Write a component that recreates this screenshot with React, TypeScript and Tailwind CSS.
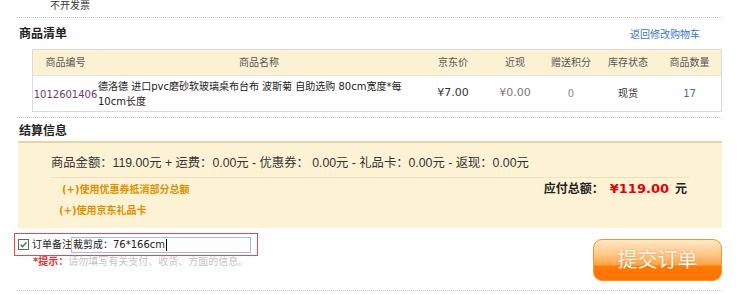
export default function App() {
  const cols = "grid grid-cols-[65px_322px_66px_58px_54px_60px_63px]";

  return (
    <div className="w-[740px] h-[294px] overflow-hidden bg-white text-[#333] font-['DejaVu_Sans','Noto_Sans_CJK_SC',sans-serif]">
      <div className="h-[11px] pl-[50px] text-[10px] leading-[11px]">不开发票</div>
      <div className="ml-[17px] mt-[6px] w-[705px] border-t border-dotted border-[#c6c6c6]" />

      {/* 商品清单 */}
      <div className="flex h-[31px] w-[722px] items-center justify-between pl-[19px] pr-[22px]">
        <h2 className="text-[12px] font-bold leading-[14px] text-[#222]">商品清单</h2>
        <a href="#" className="pt-[2px] text-[10px] leading-[12px] text-[#3a76c4]">
          返回修改购物车
        </a>
      </div>

      <div className="ml-[32px] w-[690px] border border-[#dadada] text-[10px]">
        <div className={`${cols} h-[26px] items-center border-b border-[#e2e2e2] bg-[#fdf1d4] text-center text-[#555]`}>
          <div>商品编号</div>
          <div>商品名称</div>
          <div>京东价</div>
          <div>近现</div>
          <div>赠送积分</div>
          <div>库存状态</div>
          <div>商品数量</div>
        </div>
        <div className={`${cols} h-[35px] items-center text-center`}>
          <div className="pt-[1px] text-[#6d3a6f]">1012601406</div>
          <div className="text-left leading-[15px] text-[#222]">
            德洛德 进口pvc磨砂软玻璃桌布台布 波斯菊 自助选购 80cm宽度*每
            <br />
            10cm长度
          </div>
          <div className="text-[11px] text-[#333]">¥7.00</div>
          <div className="text-[11px] text-[#777]">¥0.00</div>
          <div className="text-[#888]">0</div>
          <div className="text-[#333]">现货</div>
          <div className="text-[#3d6a9e]">17</div>
        </div>
      </div>

      <div className="ml-[17px] mt-[5px] w-[705px] border-t border-dotted border-[#c6c6c6]" />

      {/* 结算信息 */}
      <div className="h-[23px] pl-[19px] pt-[6px]">
        <h2 className="text-[12px] font-bold leading-[14px] text-[#222]">结算信息</h2>
      </div>

      <div className="ml-[18px] w-[704px] border-t-2 border-[#e6d3a6] bg-[#fef2d5] pt-[12px] pb-[8px]">
        <div className="pl-[33px] font-['Liberation_Sans','Noto_Sans_CJK_SC',sans-serif] text-[12.3px] leading-[16px] text-[#333]">
          商品金额：119.00元 + 运费：0.00元 - 优惠券： 0.00元 - 礼品卡：0.00元 - 返现：0.00元
        </div>
        <div className="ml-[33px] mt-[6px] w-[639px] border-t border-[#f1e2bf]" />
        <div className="flex h-[22px] items-center justify-between pl-[44px] pr-[35px]">
          <a href="#" className="text-[10px] font-bold text-[#d99100]">
            (+)使用优惠券抵消部分总额
          </a>
          <div className="flex items-baseline text-[12px] font-bold text-[#222]">
            应付总额：
            <span className="ml-[6px] text-[13px] text-[#e4000b]">¥119.00</span>
            <span className="ml-[6px]">元</span>
          </div>
        </div>
        <div className="flex h-[20px] items-center pl-[41px]">
          <a href="#" className="text-[10px] font-bold text-[#d99100]">
            (+)使用京东礼品卡
          </a>
        </div>
      </div>

      {/* 订单备注 + 提交 */}
      <div className="flex h-[53px] items-start justify-between">
        <div className="ml-[14px] mt-[5px]">
          <div className="flex h-[23px] w-[244px] items-center border border-[#e5484d] pl-[3px]">
            <span className="flex h-[11px] w-[11px] items-center justify-center border border-[#5d6670] bg-white">
              <svg viewBox="0 0 10 10" className="h-[9px] w-[9px]">
                <path d="M1.8 5.2 L4 7.4 L8.3 2.6" fill="none" stroke="#1f9a2a" strokeWidth="1.7" />
              </svg>
            </span>
            <span className="ml-[3px] text-[10px] leading-[12px] text-[#222]">订单备注</span>
            <div className="-ml-[1px] flex h-[16px] w-[180px] items-center border border-[#a9bcd0] bg-white pl-[1px] text-[10px] text-[#222]">
              裁剪成：76*166cm
              <span className="ml-[1px] h-[12px] w-[1px] bg-black" />
            </div>
          </div>
          <div className="pl-[19px] text-[10px] leading-[12px] text-[#c4c4c4]">
            <span className="font-bold text-[#e03030]">*提示：</span>
            请勿填写有关支付、收货、方面的信息。
          </div>
        </div>

        <button className="mr-[18px] mt-[11px] flex h-[42px] w-[129px] items-center justify-center rounded-[9px] border border-[#f3972a] bg-[linear-gradient(to_bottom,#ffe8c8_0%,#ffc888_35%,#ffa445_62%,#ff7a05_66%,#ff7200_100%)] text-[20px] leading-[24px] text-[#fffaf2] [text-shadow:0_0_2px_rgba(200,90,0,0.5)]">
          提交订单
        </button>
      </div>

      <div className="ml-[17px] mt-[9px] w-[705px] border-t border-dotted border-[#c6c6c6]" />
    </div>
  );
}
